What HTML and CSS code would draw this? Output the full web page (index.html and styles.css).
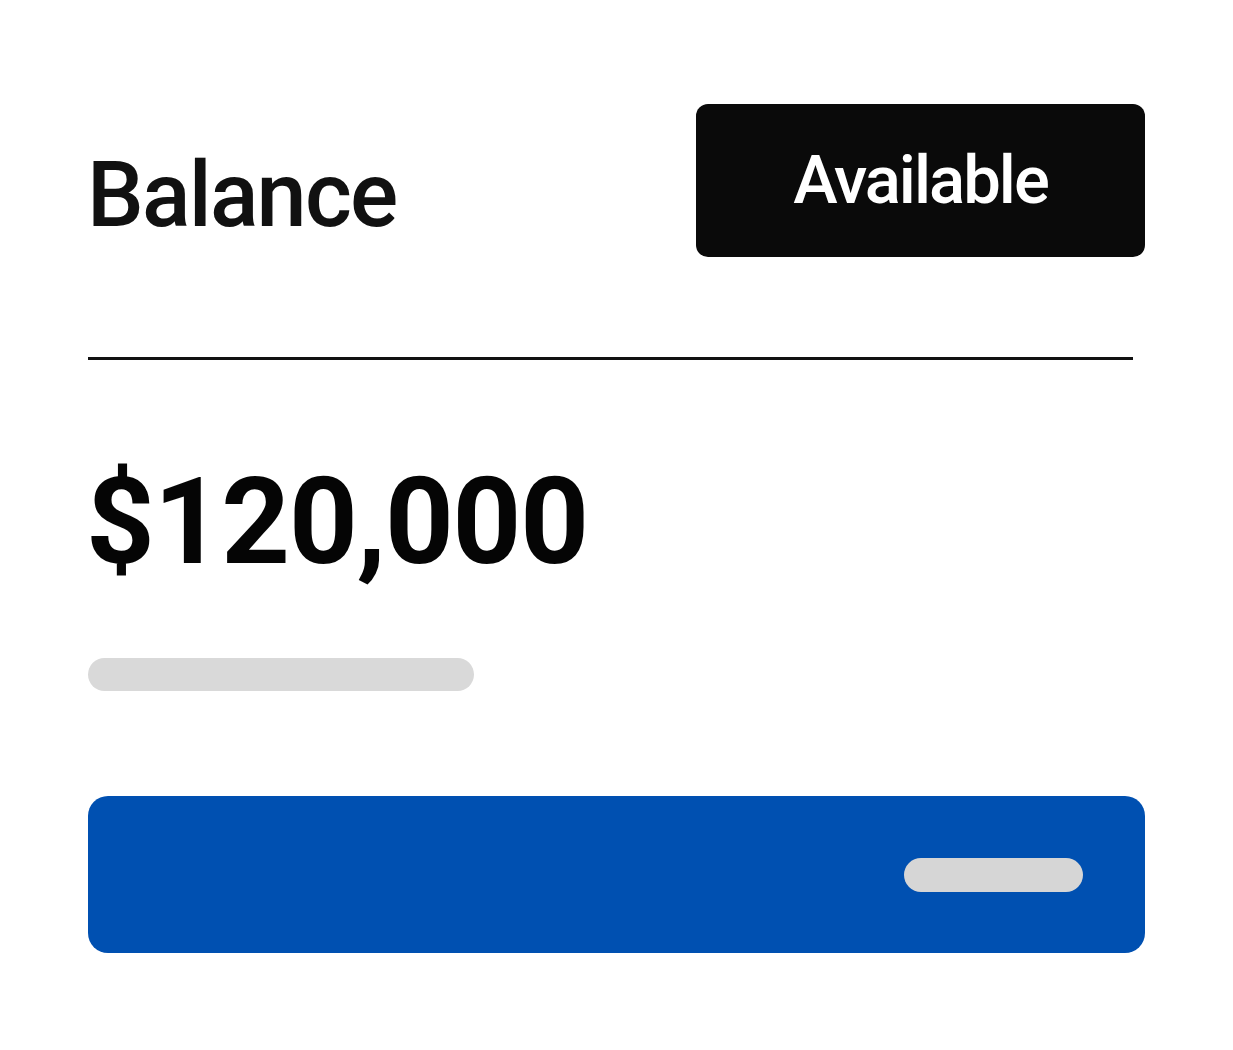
FILE: index.html
```html
<!DOCTYPE html>
<html>
<head>
<meta charset="utf-8">
<link rel="stylesheet" href="styles.css">
</head>
<body>
<div class="card">
  <div class="header">
    <div class="title">Balance</div>
    <div class="badge">Available</div>
  </div>
  <div class="divider"></div>
  <div class="amount">$120,000</div>
  <div class="skeleton"></div>
  <div class="action">
    <div class="action-pill"></div>
  </div>
</div>
</body>
</html>
```

FILE: styles.css
```css
html, body {
  margin: 0;
  padding: 0;
  background: #ffffff;
}
body {
  font-family: Roboto, "Liberation Sans", sans-serif;
  width: 1233px;
  height: 1050px;
  overflow: hidden;
}
.card {
  box-sizing: border-box;
  width: 1233px;
  height: 1050px;
  padding: 104px 88px 0 88px;
  display: flex;
  flex-direction: column;
}
.header {
  display: flex;
  justify-content: space-between;
  align-items: flex-start;
}
.title {
  margin-top: 47px;
  margin-left: -1px;
  font-size: 90px;
  line-height: 1;
  font-weight: 500;
  letter-spacing: -1.8px;
  color: #111111;
}
.badge {
  width: 449px;
  height: 153px;
  box-sizing: border-box;
  padding-top: 43px;
  background: #0a0a0a;
  color: #ffffff;
  border-radius: 12px;
  font-size: 67px;
  line-height: 1;
  text-align: center;
  font-weight: 500;
  letter-spacing: -2px;
}
.divider {
  margin-top: 100px;
  width: 1045px;
  height: 3px;
  background: #111111;
}
.amount {
  margin-top: 102px;
  margin-left: -2px;
  font-size: 120px;
  line-height: 1;
  font-weight: 700;
  letter-spacing: -1.2px;
  color: #050505;
}
.skeleton {
  margin-top: 76px;
  width: 386px;
  height: 33px;
  border-radius: 17px;
  background: #d9d9d9;
}
.action {
  margin-top: 105px;
  height: 157px;
  border-radius: 20px;
  background: #0050b1;
  display: flex;
  align-items: center;
  justify-content: flex-end;
  padding-right: 62px;
}
.action-pill {
  width: 179px;
  height: 34px;
  border-radius: 17px;
  background: #d6d6d6;
}
```
